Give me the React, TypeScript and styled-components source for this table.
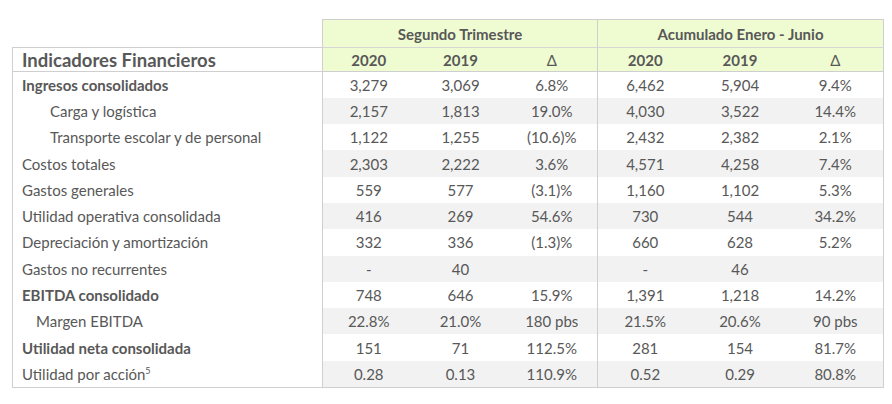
import React from 'react';
import styled, { createGlobalStyle } from 'styled-components';

const GlobalStyle = createGlobalStyle`
  html, body {
    margin: 0;
    padding: 0;
    background: #ffffff;
  }
  body {
    font-family: Lato, "Liberation Sans", sans-serif;
    color: #585858;
  }
`

const Page = styled.div`
  padding: 19px 0 0 12px;
`

const Table = styled.table`
  border-collapse: collapse;
  table-layout: fixed;
  width: 871px;
  font-size: 15px;
`

const Col = styled.col<{ $w: number }>`
  width: ${p => p.$w}px;
`

const GroupCell = styled.th`
  height: 27px;
  padding: 0;
  background: #effcd2;
  border: 1px solid #cfcfcf;
  border-bottom-color: #d6d6d6;
  font-size: 15px;
  font-weight: 700;
  text-align: center;
  vertical-align: middle;
`

const Blank = styled.th`
  padding: 0;
  border: none;
`

const TitleCell = styled.th`
  height: 23px;
  padding: 0 0 0 9px;
  border: 1px solid #cfcfcf;
  font-size: 18.5px;
  font-weight: 700;
  text-align: left;
`

const YearCell = styled.th<{ $edge?: boolean }>`
  padding: 0;
  background: #effcd2;
  border-top: 1px solid #d6d6d6;
  border-bottom: 1px solid #cfcfcf;
  border-right: ${p => (p.$edge ? '1px solid #cfcfcf' : 'none')};
  font-size: 15px;
  font-weight: ${p => (p.$edge ? 400 : 700)};
  text-align: center;
`

const Row = styled.tr<{ $striped: boolean }>`
  height: 26.3px;

  td {
    background: ${p => (p.$striped ? '#f2f2f2' : '#ffffff')};
  }
`

const Label = styled.th<{ $bold?: boolean; $indent: number }>`
  padding: 0 0 0 ${p => 9 + p.$indent}px;
  border-left: 1px solid #cfcfcf;
  border-right: 1px solid #cfcfcf;
  background: #ffffff;
  font-weight: ${p => (p.$bold ? 700 : 400)};
  text-align: left;
  white-space: nowrap;
`

const Value = styled.td<{ $edge?: boolean }>`
  padding: 0;
  text-align: center;
  border-right: ${p => (p.$edge ? '1px solid #cfcfcf' : 'none')};
`

const Sup = styled.sup`
  font-size: 9px;
`

const Foot = styled.tr`
  td {
    height: 0;
    padding: 0;
    border-top: 1px solid #cfcfcf;
  }
`

type Line = {
  label: React.ReactNode
  bold?: boolean
  indent?: number
  q: [string, string, string]
  ytd: [string, string, string]
}

const lines: Line[] = [
  { label: 'Ingresos consolidados', bold: true, q: ['3,279', '3,069', '6.8%'], ytd: ['6,462', '5,904', '9.4%'] },
  { label: 'Carga y logística', indent: 28, q: ['2,157', '1,813', '19.0%'], ytd: ['4,030', '3,522', '14.4%'] },
  { label: 'Transporte escolar y de personal', indent: 28, q: ['1,122', '1,255', '(10.6)%'], ytd: ['2,432', '2,382', '2.1%'] },
  { label: 'Costos totales', q: ['2,303', '2,222', '3.6%'], ytd: ['4,571', '4,258', '7.4%'] },
  { label: 'Gastos generales', q: ['559', '577', '(3.1)%'], ytd: ['1,160', '1,102', '5.3%'] },
  { label: 'Utilidad operativa consolidada', q: ['416', '269', '54.6%'], ytd: ['730', '544', '34.2%'] },
  { label: 'Depreciación y amortización', q: ['332', '336', '(1.3)%'], ytd: ['660', '628', '5.2%'] },
  { label: 'Gastos no recurrentes', q: ['-', '40', ''], ytd: ['-', '46', ''] },
  { label: 'EBITDA consolidado', bold: true, q: ['748', '646', '15.9%'], ytd: ['1,391', '1,218', '14.2%'] },
  { label: 'Margen EBITDA', indent: 14, q: ['22.8%', '21.0%', '180 pbs'], ytd: ['21.5%', '20.6%', '90 pbs'] },
  { label: 'Utilidad neta consolidada', bold: true, q: ['151', '71', '112.5%'], ytd: ['281', '154', '81.7%'] },
  { label: <>Utilidad por acción<Sup>5</Sup></>, q: ['0.28', '0.13', '110.9%'], ytd: ['0.52', '0.29', '80.8%'] },
]

const App: React.FC = () => {
  return (
    <Page>
      <GlobalStyle />
      <Table>
        <colgroup>
          <Col $w={310} />
          <Col $w={92} />
          <Col $w={92} />
          <Col $w={91} />
          <Col $w={95} />
          <Col $w={95} />
          <Col $w={96} />
        </colgroup>
        <thead>
          <tr>
            <Blank />
            <GroupCell colSpan={3}>Segundo Trimestre</GroupCell>
            <GroupCell colSpan={3}>Acumulado Enero - Junio</GroupCell>
          </tr>
          <tr>
            <TitleCell>Indicadores Financieros</TitleCell>
            <YearCell>2020</YearCell>
            <YearCell>2019</YearCell>
            <YearCell $edge>Δ</YearCell>
            <YearCell>2020</YearCell>
            <YearCell>2019</YearCell>
            <YearCell $edge>Δ</YearCell>
          </tr>
        </thead>
        <tbody>
          {lines.map((l, i) => (
            <Row key={i} $striped={i % 2 === 1}>
              <Label $bold={l.bold} $indent={l.indent ?? 0}>{l.label}</Label>
              <Value>{l.q[0]}</Value>
              <Value>{l.q[1]}</Value>
              <Value $edge>{l.q[2]}</Value>
              <Value>{l.ytd[0]}</Value>
              <Value>{l.ytd[1]}</Value>
              <Value $edge>{l.ytd[2]}</Value>
            </Row>
          ))}
          <Foot>
            <td colSpan={7} />
          </Foot>
        </tbody>
      </Table>
    </Page>
  )
}

export default App
